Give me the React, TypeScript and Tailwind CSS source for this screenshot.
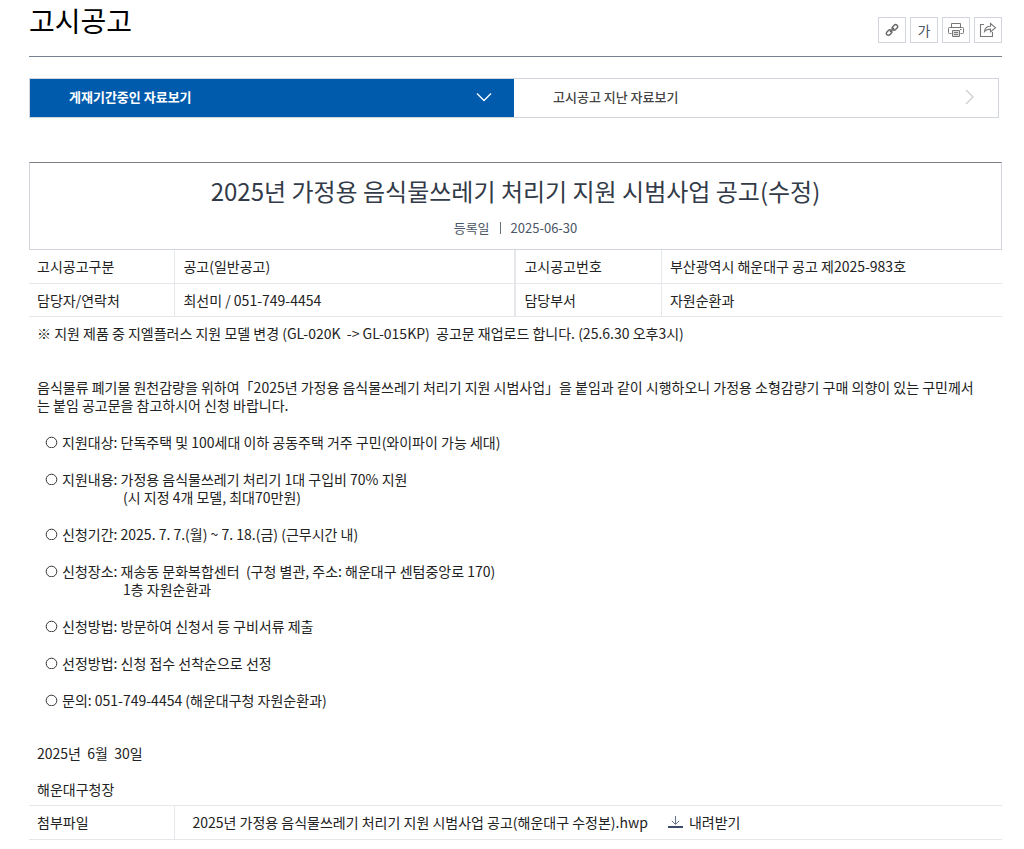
import type { ReactNode } from "react";

const tools = [
  { label: "주소 복사", icon: <LinkIcon /> },
  { label: "글자 크기", icon: <span className="text-sm leading-5 text-gray-600">가</span> },
  { label: "인쇄", icon: <PrintIcon /> },
  { label: "공유", icon: <ShareIcon /> },
];

const infoRows = [
  ["고시공고구분", "공고(일반공고)", "고시공고번호", "부산광역시 해운대구 공고 제2025-983호"],
  ["담당자/연락처", "최선미 / 051-749-4454", "담당부서", "자원순환과"],
];

const details = [
  { label: "지원대상", text: "단독주택 및 100세대 이하 공동주택 거주 구민(와이파이 가능 세대)" },
  {
    label: "지원내용",
    text: "가정용 음식물쓰레기 처리기 1대 구입비 70% 지원",
    sub: "(시 지정 4개 모델, 최대70만원)",
  },
  { label: "신청기간", text: "2025. 7. 7.(월) ~ 7. 18.(금) (근무시간 내)" },
  {
    label: "신청장소",
    text: "재송동 문화복합센터  (구청 별관, 주소: 해운대구 센텀중앙로 170)",
    sub: "1층 자원순환과",
  },
  { label: "신청방법", text: "방문하여 신청서 등 구비서류 제출" },
  { label: "선정방법", text: "신청 접수 선착순으로 선정" },
  { label: "문의", text: "051-749-4454 (해운대구청 자원순환과)" },
];

function LinkIcon() {
  return (
    <svg width="14" height="14" viewBox="0 0 14 14" fill="none" stroke="#666" strokeWidth="1.4">
      <rect x="6.9" y="2.4" width="6" height="4" rx="2" transform="rotate(-45 9.900 4.400)" />
      <rect x="1.1" y="7.6" width="6" height="4" rx="2" transform="rotate(-45 4.100 9.600)" />
      <path d="M5 9l4-4" />
    </svg>
  );
}

function PrintIcon() {
  return (
    <svg width="16" height="16" viewBox="0 0 16 16" fill="none" stroke="#777">
      <path d="M3.500 5.500v-4h9v4" />
      <path d="M3.500 11.500h-2a1 1 0 0 1-1-1v-4a1 1 0 0 1 1-1h13a1 1 0 0 1 1 1v4a1 1 0 0 1-1 1h-2" />
      <path d="M4.500 8.500h7v6h-7z" fill="#ddd" />
      <path d="M6 10.500h4M6 12.500h4M12 7.500h1.500" />
    </svg>
  );
}

function ShareIcon() {
  return (
    <svg width="18" height="16" viewBox="0 0 18 16" fill="none" stroke="#777" strokeWidth="1.1">
      <path d="M5 2.500H1.500v12h12V10" />
      <path d="M5.500 9.500c.3-3.500 2.500-5.200 6-5.200V1.500l5 4.200-5 4.200V7.100c-2.800 0-4.500.6-6 2.400z" />
    </svg>
  );
}

function DownloadIcon() {
  return (
    <svg width="15" height="12" viewBox="0 0 15 12" fill="none" stroke="#64748b">
      <path d="M7.500 0v8M3.800 4.800l3.700 3.700 3.700-3.700" />
      <path d="M0 11h15" stroke="#3b4b66" strokeWidth="2" />
    </svg>
  );
}

function HeadCell({ children }: { children: ReactNode }) {
  return (
    <th scope="row" className="w-[15%] border-r border-gray-200 px-2 text-left font-normal">
      {children}
    </th>
  );
}

export default function App() {
  return (
    <main className="bg-white pr-[22px] pb-2 pl-[29px] font-['Noto_Sans_CJK_KR',sans-serif] text-sm leading-[18px] text-[#222]">
      <header className="flex items-start justify-between border-b border-[#75828f] pb-[13px]">
        <h1 className="text-[28px] leading-10 text-black">고시공고</h1>
        <div className="flex gap-1 pt-[17px]">
          {tools.map((tool) => (
            <button
              key={tool.label}
              aria-label={tool.label}
              className="flex h-[26px] w-7 items-center justify-center border border-gray-300"
            >
              {tool.icon}
            </button>
          ))}
        </div>
      </header>

      <nav className="mt-[21px] mr-[3px] grid h-10 grid-cols-2 border border-gray-300 text-[13px]">
        <a href="#current" className="flex items-center justify-between bg-[#005bac] pr-[22px] pb-0.5 pl-[39px] font-bold text-white">
          게재기간중인 자료보기
          <svg width="16" height="10" viewBox="0 0 16 10" fill="none" stroke="white" strokeWidth="1.300">
            <path d="M1 1.500l7 7 7-7" />
          </svg>
        </a>
        <a href="#past" className="flex items-center justify-between pr-6 pb-0.5 pl-[39px] font-medium text-[#444]">
          고시공고 지난 자료보기
          <svg width="9" height="16" viewBox="0 0 9 16" fill="none" stroke="#ccc" strokeWidth="1.200">
            <path d="M1 1l7 7-7 7" />
          </svg>
        </a>
      </nav>

      <article className="mt-11">
        <div className="border border-gray-300 border-t-[#7b8087] pt-2.5 pb-3 text-center">
          <h2 className="text-2xl leading-9 text-[#333b48]">
            2025년 가정용 음식물쓰레기 처리기 지원 시범사업 공고(수정)
          </h2>
          <p className="mt-2.5 flex items-center justify-center gap-2.5 text-[13px] text-gray-600">
            <span>등록일</span>
            <span className="h-3 w-px bg-gray-500" />
            <span>2025-06-30</span>
          </p>
        </div>

        <table className="w-full table-fixed border-collapse">
          <tbody>
            {infoRows.map(([name, value, name2, value2]) => (
              <tr key={name} className="h-[33px] border-b border-gray-200">
                <HeadCell>{name}</HeadCell>
                <td className="w-[35%] border-r-2 border-gray-200 px-2">{value}</td>
                <HeadCell>{name2}</HeadCell>
                <td className="w-[35%] px-2">{value2}</td>
              </tr>
            ))}
          </tbody>
        </table>

        <div className="px-2 pt-[7px] pb-[7px]">
          <p className="whitespace-pre-wrap">
            {"※ 지원 제품 중 지엘플러스 지원 모델 변경 (GL-020K  -> GL-015KP)  공고문 재업로드 합니다. (25.6.30 오후3시)"}
          </p>
          <p className="mt-9 pr-3 break-all">
            음식물류 폐기물 원천감량을 위하여「2025년 가정용 음식물쓰레기 처리기 지원 시범사업」을 붙임과 같이
            시행하오니 가정용 소형감량기 구매 의향이 있는 구민께서는 붙임 공고문을 참고하시어 신청 바랍니다.
          </p>
          <ul className="mt-[19px] flex flex-col gap-[19px] pl-2">
            {details.map((item) => (
              <li key={item.label} className="whitespace-pre-wrap">
                <div className="flex items-center gap-1">
                  <svg width="13" height="13" viewBox="0 0 13 13" fill="none" stroke="#333">
                    <circle cx="6.500" cy="7.500" r="5.300" />
                  </svg>
                  <span>{item.label + ": " + item.text}</span>
                </div>
                {item.sub && <p className="pl-[78px]">{item.sub}</p>}
              </li>
            ))}
          </ul>
          <p className="mt-[35px] whitespace-pre-wrap">{"2025년  6월  30일"}</p>
          <p className="mt-[18px]">해운대구청장</p>
        </div>

        <table className="w-full table-fixed border-collapse">
          <tbody>
            <tr className="h-[34px] border-y border-gray-200">
              <HeadCell>첨부파일</HeadCell>
              <td className="px-[17px]">
                <div className="flex items-center gap-5">
                  <a href="#file">2025년 가정용 음식물쓰레기 처리기 지원 시범사업 공고(해운대구 수정본).hwp</a>
                  <a href="#download" className="flex items-center gap-1.5">
                    <DownloadIcon />
                    내려받기
                  </a>
                </div>
              </td>
            </tr>
          </tbody>
        </table>
      </article>
    </main>
  );
}
